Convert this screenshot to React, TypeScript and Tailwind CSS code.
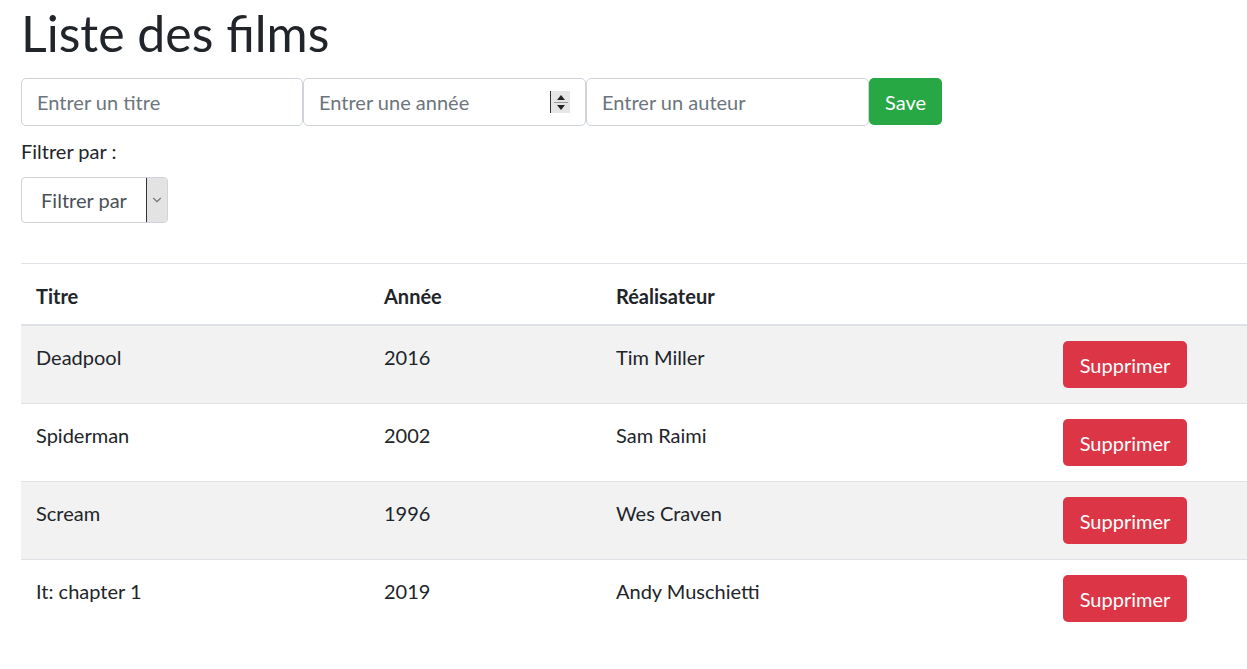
import { ChevronDown } from 'lucide-react';

const films = [
  { titre: 'Deadpool', annee: '2016', real: 'Tim Miller' },
  { titre: 'Spiderman', annee: '2002', real: 'Sam Raimi' },
  { titre: 'Scream', annee: '1996', real: 'Wes Craven' },
  { titre: 'It: chapter 1', annee: '2019', real: 'Andy Muschietti' },
];

const font = { fontFamily: '"Segoe UI", Lato, "Liberation Sans", sans-serif' };

export default function App() {
  return (
    <div className="w-[1247px] h-[669px] overflow-hidden bg-white text-[#212529] text-[20px] leading-[30px]" style={font}>
      <div className="pl-[21px] pt-[3px]">
        <h1 className="text-[50px] leading-[60px] font-normal mb-[15px]">Liste des films</h1>

        {/* formulaire */}
        <div className="flex">
          <input
            className="w-[282px] h-[48px] border border-[#ced4da] rounded-[5px] px-[15px] placeholder:text-[#6c757d] outline-none"
            placeholder="Entrer un titre"
          />
          <div className="relative">
            <input
              className="w-[283px] h-[48px] border border-[#ced4da] rounded-[5px] px-[15px] placeholder:text-[#6c757d] outline-none"
              placeholder="Entrer une année"
            />
            <div className="absolute left-[247px] top-[13px] w-[20px] h-[22px] border-l border-[#333] bg-[#e6e6e6] flex flex-col items-center justify-center gap-[2px]">
              <div className="w-0 h-0 border-l-[4px] border-r-[4px] border-b-[5px] border-l-transparent border-r-transparent border-b-[#222]" />
              <div className="w-[14px] h-px bg-[#999]" />
              <div className="w-0 h-0 border-l-[4px] border-r-[4px] border-t-[5px] border-l-transparent border-r-transparent border-t-[#222]" />
            </div>
          </div>
          <input
            className="w-[283px] h-[48px] border border-[#ced4da] rounded-[5px] px-[15px] placeholder:text-[#6c757d] outline-none"
            placeholder="Entrer un auteur"
          />
          <button className="w-[73px] h-[47px] rounded-[5px] bg-[#28a745] text-white">Save</button>
        </div>

        {/* filtre */}
        <div className="mt-[10px]">Filtrer par :</div>
        <div className="mt-[11px] flex w-[147px] h-[46px] border border-[#ced4da] rounded-[4px] overflow-hidden">
          <div className="flex-1 flex items-center justify-center text-[#495057]">Filtrer par</div>
          <div className="w-[21px] border-l border-[#333] bg-[#e3e3e3] flex items-center justify-center">
            <ChevronDown size={14} strokeWidth={2} className="text-[#777]" />
          </div>
        </div>

        {/* tableau */}
        <table className="mt-[40px] w-[1240px] border-collapse">
          <thead>
            <tr className="border-t border-[#dee2e6]">
              <th className="text-left font-bold px-[15px] pt-[17px] pb-[13px] w-[348px] border-b-2 border-[#dee2e6]">Titre</th>
              <th className="text-left font-bold px-[15px] pt-[17px] pb-[13px] w-[232px] border-b-2 border-[#dee2e6]">Année</th>
              <th className="text-left font-bold px-[15px] pt-[17px] pb-[13px] w-[447px] border-b-2 border-[#dee2e6]">Réalisateur</th>
              <th className="border-b-2 border-[#dee2e6]" />
            </tr>
          </thead>
          <tbody>
            {films.map((f, i) => (
              <tr key={f.titre} className={`border-t border-[#dee2e6] ${i % 2 === 0 ? 'bg-[#f2f2f2]' : 'bg-white'}`}>
                <td className="align-top px-[15px] pt-[16px] pb-[14px]">{f.titre}</td>
                <td className="align-top px-[15px] pt-[16px] pb-[14px]">{f.annee}</td>
                <td className="align-top px-[15px] pt-[16px] pb-[14px]">{f.real}</td>
                <td className="align-top px-[15px] pt-[15px] pb-[15px]">
                  <button className="block w-[124px] h-[47px] rounded-[5px] bg-[#dc3545] text-white">Supprimer</button>
                </td>
              </tr>
            ))}
          </tbody>
        </table>
      </div>
    </div>
  );
}
